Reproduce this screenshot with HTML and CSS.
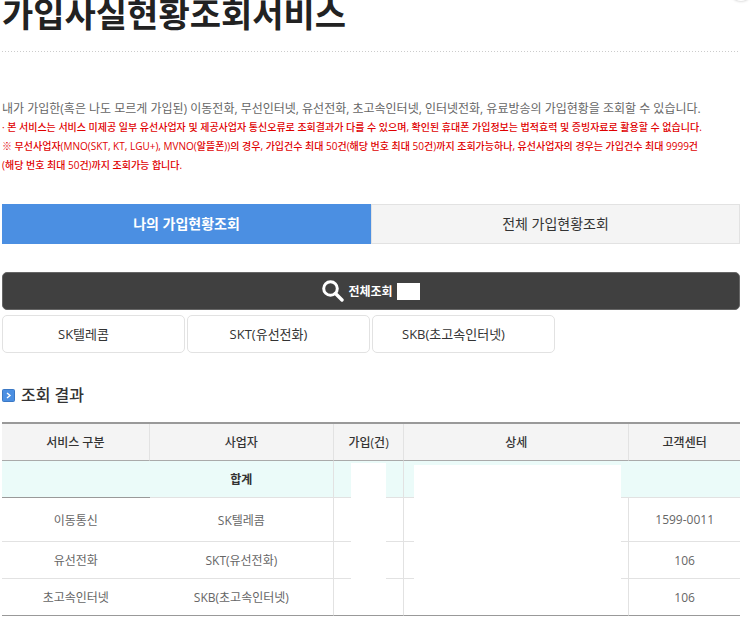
FILE: index.html
```html
<!DOCTYPE html>
<html lang="ko">
    <head>
        <meta charset="utf-8">
        <meta name="viewport" content="width=device-width, initial-scale=1">
        <title>가입사실현황조회서비스</title>
        <link rel="stylesheet" href="styles.css">
    </head>
    <body>
        <div class="round_btn"></div>
        <div class="container">
            <h1 class="page_title">가입사실현황조회서비스</h1>

            <div class="intro">
                <p>내가 가입한(혹은 나도 모르게 가입된) 이동전화, 무선인터넷, 유선전화, 초고속인터넷, 인터넷전화, 유료방송의 가입현황을 조회할 수 있습니다.</p>
                <p class="notice">· 본 서비스는 서비스 미제공 일부 유선사업자 및 제공사업자 통신오류로 조회결과가 다를 수 있으며, 확인된 휴대폰 가입정보는 법적효력 및 증빙자료로 활용할 수 없습니다.</p>
                <p class="notice">※ 무선사업자(MNO(SKT, KT, LGU+), MVNO(알뜰폰))의 경우, 가입건수 최대 50건(해당 번호 최대 50건)까지 조회가능하나, 유선사업자의 경우는 가입건수 최대 9999건<br>(해당 번호 최대 50건)까지 조회가능 합니다.</p>
            </div>

            <div class="tabs">
                <button type="button" class="tab on">나의 가입현황조회</button>
                <button type="button" class="tab">전체 가입현황조회</button>
            </div>

            <button type="button" class="search_all">
                <svg class="search_icon" viewBox="0 0 22 22" width="22" height="22">
                    <circle cx="8.5" cy="8.5" r="6.8" fill="none" stroke="#fff" stroke-width="3"/>
                    <path d="M13.5 13.5L20 20" stroke="#fff" stroke-width="3.4" stroke-linecap="round"/>
                </svg>
                <span>전체조회</span>
                <span class="blank_count"></span>
            </button>
            <div class="providers">
                <button type="button" class="provider">SK텔레콤</button>
                <button type="button" class="provider">SKT(유선전화)</button>
                <button type="button" class="provider">SKB(초고속인터넷)</button>
            </div>

            <h2 class="result_title">
                <svg viewBox="0 0 13 13" width="13" height="13">
                    <rect x="0.5" y="0.5" width="12" height="12" rx="1" fill="#4b8fe2" stroke="#3b78c4"/>
                    <path d="M5 4L8 6.5L5 9" fill="none" stroke="#fff" stroke-width="1.4"/>
                </svg>
                조회 결과
            </h2>
            <table class="result">
                <colgroup>
                    <col class="col_service">
                    <col class="col_provider">
                    <col class="col_count">
                    <col class="col_detail">
                    <col class="col_center">
                </colgroup>
                <thead>
                    <tr>
                        <th>서비스 구분</th>
                        <th>사업자</th>
                        <th>가입(건)</th>
                        <th>상세</th>
                        <th>고객센터</th>
                    </tr>
                </thead>
                <tbody>
                    <tr class="total">
                        <td></td>
                        <td>합계</td>
                        <td><span class="mask mask_count"></span></td>
                        <td><span class="mask mask_detail"></span></td>
                        <td></td>
                    </tr>
                    <tr class="tall">
                        <td>이동통신</td>
                        <td>SK텔레콤</td>
                        <td></td>
                        <td></td>
                        <td>1599-0011</td>
                    </tr>
                    <tr>
                        <td>유선전화</td>
                        <td>SKT(유선전화)</td>
                        <td></td>
                        <td></td>
                        <td>106</td>
                    </tr>
                    <tr>
                        <td>초고속인터넷</td>
                        <td>SKB(초고속인터넷)</td>
                        <td></td>
                        <td></td>
                        <td>106</td>
                    </tr>
                </tbody>
            </table>
        </div>
    </body>
</html>
```
FILE: styles.css
```css
* {
    box-sizing: border-box;
}

html,body,h1,h2,p {
    margin: 0;
    padding: 0;
}

body {
    position: relative;
    overflow: hidden;
    background: #fff;
    color: #666;
    font-family: "Open Sans", "Noto Sans CJK KR", sans-serif;
    font-size: 12px;
}

button {
    margin: 0;
    padding: 0 0 2px;
    font-family: inherit;
    cursor: pointer;
}

.container {
    padding: 0 12px 0 2px;
}

.round_btn {
    position: absolute;
    top: -21px;
    right: 0;
    width: 22px;
    height: 22px;
    border-radius: 50%;
    background: #fff;
    box-shadow: 0 0 3px #bbb;
}

.page_title {
    height: 52px;
    color: #222;
    font-size: 34px;
    font-weight: bold;
    line-height: 28px;
    background: repeating-linear-gradient(90deg, #ccc 0, #ccc 1px, #fff 1px, #fff 3px) left bottom / 100% 1px no-repeat;
}

.intro {
    padding-top: 47px;
    font-size: 12px;
    line-height: 19px;
}

.notice {
    color: #e00000;
    font-size: 10px;
    font-weight: 500;
}

.tabs {
    display: flex;
    margin-top: 29px;
}

.tab {
    flex: 1;
    height: 40px;
    border: 1px solid #e2e2e2;
    background: #f4f4f4;
    color: #333;
    font-size: 14px;
}

.tab.on {
    border-color: #4b8fe2;
    background: #4b8fe2;
    color: #fff;
    font-weight: bold;
}

.search_all {
    display: flex;
    justify-content: center;
    align-items: center;
    gap: 4px;
    width: 100%;
    height: 38px;
    margin-top: 28px;
    padding: 0;
    border: 1px solid #666;
    border-radius: 5px;
    background: #404040;
    color: #fff;
    font-size: 12px;
    font-weight: bold;
}

.blank_count {
    width: 23px;
    height: 17px;
    background: #fff;
}

.providers {
    display: grid;
    grid-template-columns: repeat(4, 1fr);
    gap: 2px;
    margin-top: 5px;
}

.provider {
    height: 38px;
    padding-right: 20px;
    border: 1px solid #e2e2e2;
    border-radius: 5px;
    background: #fff;
    color: #333;
    font-size: 13px;
}

.result_title {
    display: flex;
    align-items: center;
    gap: 6px;
    margin: 30px 0 15px;
    color: #333;
    font-size: 16px;
    font-weight: 500;
    line-height: 24px;
}

.result {
    width: 100%;
    table-layout: fixed;
    border-collapse: separate;
    border-spacing: 0;
    border-top: 2px solid #999;
    text-align: center;
}

.col_service {
    width: 20%;
}

.col_provider {
    width: 25%;
}

.col_count {
    width: 70px;
}

.col_center {
    width: 15%;
}

.result th, .result td {
    position: relative;
    height: 37px;
    padding: 0;
    border-right: 1px solid #e2e2e2;
    border-bottom: 1px solid #e2e2e2;
}

.result th {
    border-bottom-color: #aaa;
    background: #f4f4f4;
    color: #333;
    font-weight: 500;
}

.result .tall td {
    height: 44px;
}

.result td:first-child, .result .total td:nth-child(4) {
    border-right: 0;
}

.result th:last-child, .result td:last-child {
    border-right: 0;
}

.result .total td {
    background: #ebfbf9;
    color: #333;
    font-weight: bold;
}

.result .total td:first-child, .result tbody tr:last-child td {
    border-bottom-color: #999;
}

/* white blocks over the private columns */
.mask {
    position: absolute;
    z-index: 1;
    height: 150px;
    background: #fff;
}

.mask_count {
    top: 2px;
    left: 17px;
    right: 17px;
}

.mask_detail {
    top: 4px;
    left: 10px;
    right: 8px;
}
```
